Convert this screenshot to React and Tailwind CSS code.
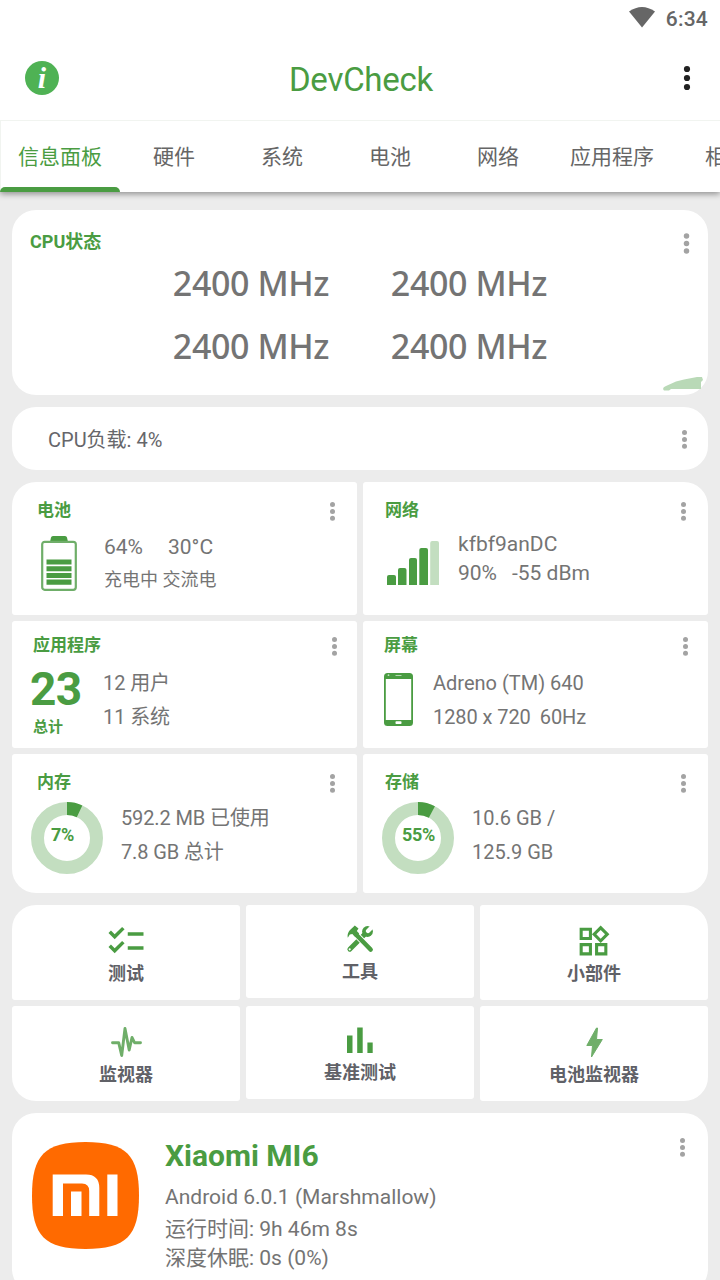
import React, { useState } from 'react'
import { MdChecklist, MdOutlineWidgets } from 'react-icons/md'

const TABS = [
  { label: '信息面板', width: 'w-[120px]' },
  { label: '硬件', width: 'w-[108px]' },
  { label: '系统', width: 'w-[108px]' },
  { label: '电池', width: 'w-[108px]' },
  { label: '网络', width: 'w-[108px]' },
  { label: '应用程序', width: 'w-[120px]' },
  { label: '相机', width: 'w-[108px]' },
]

const CORES = [2400, 2400, 2400, 2400]

function Dots({ className = '' }) {
  return (
    <svg viewBox="0 0 7 20" className={`h-5 w-[7px] shrink-0 fill-[#a3a3a3] ${className}`}>
      <circle cx="3.5" cy="3.6" r="2.5" />
      <circle cx="3.5" cy="10.4" r="2.5" />
      <circle cx="3.5" cy="17.2" r="2.5" />
    </svg>
  )
}

function Card({ className = '', children }) {
  return <section className={`bg-white ${className}`}>{children}</section>
}

function CardHeader({ title, className = '', dots = '' }) {
  return (
    <div className={`flex justify-between ${className}`}>
      <h2 className="text-[17px] leading-6 font-bold text-[#4a9c42]">{title}</h2>
      <Dots className={`mt-[3px] ${dots}`} />
    </div>
  )
}

function Donut({ label, sweep, labelClass }) {
  const len = 2 * Math.PI * 29.5
  return (
    <div className="relative h-[72px] w-[72px] shrink-0">
      <svg viewBox="0 0 72 72" className="h-full w-full -rotate-90">
        <circle cx="36" cy="36" r="29.5" fill="none" stroke="#c3dec0" strokeWidth="13" />
        <circle
          cx="36" cy="36" r="29.5" fill="none" stroke="#4a9c42" strokeWidth="13"
          strokeDasharray={`${len * sweep} ${len}`}
        />
      </svg>
      <span className={`absolute top-[21px] text-[18px] leading-6 font-bold tracking-[-0.3px] text-[#4a9c42] ${labelClass}`}>
        {label}
      </span>
    </div>
  )
}

function BatteryIcon() {
  return (
    <svg viewBox="0 0 36 55" className="h-[55px] w-9 shrink-0">
      <path d="M9 6 10 1.5Q10.300 0 12 0H24Q25.700 0 26 1.500L27 6Z" fill="#4a9c42" />
      <rect x="1.200" y="5.800" width="33.600" height="48" rx="2.500" fill="none" stroke="#6fae69" strokeWidth="2.200" />
      <path d="M5.500 23.500h25v5h-25zM5.500 30.200h25v5h-25zM5.500 36.900h25v5h-25zM5.500 43.600h25v5.200h-25z" fill="#4a9c42" />
    </svg>
  )
}

function SignalIcon() {
  return (
    <svg viewBox="0 0 52 44" className="h-11 w-[52px] shrink-0 fill-[#4a9c42]">
      <path d="M0 44V36q0-2 2-2h5q2 0 2 2v8z" />
      <path d="M11 44V29q0-2 2-2h4.500q2 0 2 2v15z" />
      <path d="M22 44V19q0-2 2-2h4q2 0 2 2v25z" />
      <path d="M32.300 44V9q0-2 2-2H39q2 0 2 2v35z" />
      <path d="M43.200 44V2q0-2 2-2H50q2 0 2 2v42z" fill="#c3dec0" />
    </svg>
  )
}

function PhoneIcon() {
  return (
    <svg viewBox="0 0 29 53" className="h-[53px] w-[29px] shrink-0">
      <rect width="29" height="53" rx="3.500" fill="#4a9c42" />
      <rect x="1.800" y="6" width="25.400" height="41" fill="#fff" />
      <rect x="11.500" y="48.300" width="6" height="2.700" rx="0.800" fill="#fff" />
      <path d="M11.500 2.500h6" stroke="#c3dec0" strokeWidth="0.900" />
      <circle cx="4.500" cy="2.200" r="0.900" fill="#c3dec0" />
    </svg>
  )
}

function ToolsIcon() {
  return (
    <svg viewBox="0 0 28 28" className="h-7 w-7">
      {/* wrench */}
      <path d="M3.800 24.200 19.500 8.500" stroke="#4a9c42" strokeWidth="4.800" strokeLinecap="round" />
      <circle cx="21.500" cy="6.500" r="5.400" fill="#4a9c42" />
      <path d="M22 6 29-1" stroke="#fff" strokeWidth="4.200" strokeLinecap="round" />
      <circle cx="3.700" cy="24.300" r="1.100" fill="#fff" />
      {/* hammer */}
      <path d="M12 11.500 24.600 24.300" stroke="#fff" strokeWidth="6.200" />
      <path d="M9.500 9 24.600 24.500" stroke="#4a9c42" strokeWidth="4.600" strokeLinecap="round" />
      <path d="M1.800 12.800C1 8.500 3 5.500 6.200 3L8.800 0.600 12.500 3.500 10.800 6 13.200 8.600 9.300 12 6.300 9 3.800 9.500Z" fill="#4a9c42" />
    </svg>
  )
}

function PulseIcon() {
  return (
    <svg viewBox="0 0 32 32" className="h-8 w-8">
      <path
        d="M2.500 16.700H8.700L11.700 29.500 15 2.500 19.200 24 22 11.500 24.500 16.700H30.500"
        fill="none" stroke="#6fae69" strokeWidth="2.900" strokeLinecap="round" strokeLinejoin="round"
      />
    </svg>
  )
}

function BarsIcon() {
  return (
    <svg viewBox="0 0 26 26" className="h-[26px] w-[26px] fill-[#4a9c42]">
      <path d="M0 8.500h5.500V26H0zM10.200 0.500h5.500V26h-5.500zM20.400 15.500h5.300V26h-5.300z" />
    </svg>
  )
}

function BoltIcon() {
  return (
    <svg viewBox="0 0 17 31" className="h-[31px] w-[17px]">
      <path d="M10.500 1 0.800 18.500H6.500L5.500 30 16.300 12.500H10.500L11.500 1Z" fill="#6fae69" stroke="#6fae69" strokeLinejoin="round" />
    </svg>
  )
}

function MiLogo() {
  return (
    <svg viewBox="0 0 107 107" className="mt-[29px] ml-5 h-[107px] w-[107px] shrink-0">
      <path d="M53.500 0C94 0 107 13 107 53.500S94 107 53.500 107 0 94 0 53.500 13 0 53.500 0Z" fill="#ff6a00" />
      <path
        d="M20.700 32.500H54Q67.300 32.500 67.300 46V74H57.200V49Q57.200 41.500 50 41.500H31V74H20.700ZM39 49.500H49.500V74H39ZM75.300 32.500H85.500V74H75.300Z"
        fill="#fff"
      />
    </svg>
  )
}

const SHORTCUTS = [
  { label: '测试', icon: <MdChecklist className="h-[42px] w-[42px] shrink-0 text-[#4a9c42]" />, shape: 'rounded-[3px] rounded-tl-[24px] h-[95px]' },
  { label: '工具', icon: <ToolsIcon />, shape: 'rounded-[3px] h-[93px]' },
  { label: '小部件', icon: <MdOutlineWidgets className="mr-0.5 h-[37px] w-[37px] text-[#4a9c42]" />, shape: 'rounded-[3px] rounded-tr-[24px] h-[95px]' },
  { label: '监视器', icon: <PulseIcon />, shape: 'rounded-[3px] rounded-bl-[24px] h-[95px]' },
  { label: '基准测试', icon: <BarsIcon />, shape: 'rounded-[3px] h-[93px]' },
  { label: '电池监视器', icon: <BoltIcon />, shape: 'rounded-[3px] rounded-br-[24px] h-[95px]' },
]

export default function App() {
  const [active, setActive] = useState(0)

  return (
    <div className="h-[1280px] w-[720px] overflow-hidden bg-[#ececec] font-['Roboto','Noto_Sans_CJK_SC',sans-serif] text-[#747474]">
      <header className="relative h-48 bg-white shadow-[0_2px_6px_rgba(0,0,0,0.4)]">
        {/* Status bar */}
        <div className="flex h-9 items-center justify-end gap-3 pt-0.5 pr-3">
          <svg viewBox="0 0 26 21" className="-mt-1 -mr-px h-[21px] w-[26px] fill-[#666]">
            <path d="M0 4.500Q13-4.500 26 4.500L13 20.500Z" />
          </svg>
          <span className="text-[21px] leading-9 font-medium tracking-[0.2px] text-[#666]">6:34</span>
        </div>

        {/* Title bar */}
        <div className="grid h-[84px] grid-cols-[1fr_auto_1fr] items-center px-[30px]">
          <div className="-ml-[5px] flex h-[34px] w-[34px] items-center justify-center rounded-full bg-[#4fb254] font-['Liberation_Serif',serif] text-[30px] leading-[34px] font-bold text-white italic">
            i
          </div>
          <h1 className="pt-[3px] pl-0.5 text-[33px] leading-10 tracking-[-0.25px] text-[#4a9c42]">DevCheck</h1>
          <svg viewBox="0 0 6 24" className="h-6 w-1.5 justify-self-end overflow-visible fill-[#212121]">
            <circle cx="3" cy="3" r="3.100" />
            <circle cx="3" cy="12" r="3.100" />
            <circle cx="3" cy="21" r="3.100" />
          </svg>
        </div>

        {/* Tabs */}
        <nav className="flex h-[72px] overflow-hidden border-t border-[#f1f4f0] shadow-[inset_1px_0_#f1f4f0]">
          {TABS.map((tab, i) => (
            <button
              key={tab.label}
              onClick={() => setActive(i)}
              className={`flex h-[71px] shrink-0 flex-col justify-between text-[21px] ${tab.width} ${active === i ? 'text-[#4a9c42]' : 'text-[#666]'}`}
            >
              <span className="block w-full pt-[3px] text-center leading-[66px]">{tab.label}</span>
              {active === i && <span className="-mt-1 block h-[5px] w-full shrink-0 rounded-t-[5px] bg-[#4a9c42]" />}
            </button>
          ))}
        </nav>
      </header>

      <main className="flex flex-col gap-3 px-3 pt-[18px]">
        {/* CPU status */}
        <Card className="relative h-[185px] rounded-[24px]">
          <div className="flex justify-between px-[18px] pt-5">
            <h2 className="text-[18px] leading-6 font-bold text-[#4a9c42]">CPU状态</h2>
            <Dots className="mt-[3px] scale-110" />
          </div>
          <div className="mx-auto -mt-0.5 grid w-[436px] grid-cols-2 font-['Noto_Sans',sans-serif] text-[34px] leading-[63px] font-medium tracking-[-0.4px]">
            {CORES.map((mhz, i) => (
              <span key={i} className="text-center">{mhz} MHz</span>
            ))}
          </div>
          <svg viewBox="0 0 40 14" className="absolute right-[5px] bottom-1 h-3.5 w-10 fill-[#b9d9b7]">
            <path d="M0 12Q0 10 3 9L13 4.500 21 2.500 34 0H39L40 3 38 5V12H8L6 13.500H1Z" />
          </svg>
        </Card>

        {/* CPU load */}
        <Card className="flex h-[63px] items-center justify-between rounded-[24px] pr-5 pl-9">
          <span className="pt-0.5 text-[20px] leading-7 text-[#66666a]">CPU负载: 4%</span>
          <Dots />
        </Card>

        <div className="grid grid-cols-2 gap-1.5">
          {/* Battery */}
          <Card className="h-[133px] rounded-[3px] rounded-tl-[24px]">
            <CardHeader title="电池" className="pt-4 pl-[25px]" dots="mr-[21px]" />
            <div className="flex pl-[29px]">
              <div className="mt-3.5"><BatteryIcon /></div>
              <div className="mt-2.5 ml-[27px]">
                <div className="flex gap-[25px] text-[21px] leading-[30px]">
                  <span>64%</span>
                  <span>30°C</span>
                </div>
                <p className="mt-px text-[18px] leading-[34px]">充电中 交流电</p>
              </div>
            </div>
          </Card>

          {/* Network */}
          <Card className="h-[133px] rounded-[3px] rounded-tr-[24px]">
            <CardHeader title="网络" className="pt-4 pl-[22px]" dots="mr-[21px]" />
            <div className="flex pl-6">
              <div className="mt-[19px]"><SignalIcon /></div>
              <div className="mt-2 ml-[19px] text-[21px] leading-[29px]">
                <p>kfbf9anDC</p>
                <p className="flex gap-[15px]"><span>90%</span><span>-55 dBm</span></p>
              </div>
            </div>
          </Card>

          {/* Apps */}
          <Card className="h-[127px] rounded-[3px]">
            <CardHeader title="应用程序" className="pt-3 pl-[21px]" dots="mr-[19px]" />
            <div className="flex pl-[18px]">
              <div className="mt-[9px] w-[73px] font-bold text-[#4a9c42]">
                <p className="text-[46px] leading-[47px] tracking-[-0.7px]">23</p>
                <p className="mt-px pl-[3px] text-[15px] leading-[26px]">总计</p>
              </div>
              <div className="mt-[9px] text-[20px] leading-[34px] tracking-[-0.1px]">
                <p>12 用户</p>
                <p>11 系统</p>
              </div>
            </div>
          </Card>

          {/* Display */}
          <Card className="h-[127px] rounded-[3px]">
            <CardHeader title="屏幕" className="pt-3 pl-[21px]" dots="mr-[19px]" />
            <div className="flex pl-[21px]">
              <div className="mt-4"><PhoneIcon /></div>
              <div className="mt-[9px] ml-5 text-[20px] leading-[34px]">
                <p>Adreno (TM) 640</p>
                <p className="flex gap-[9px] tracking-[-0.08px]"><span>1280 x 720</span><span>60Hz</span></p>
              </div>
            </div>
          </Card>

          {/* Memory */}
          <Card className="h-[139px] rounded-[3px] rounded-bl-[24px]">
            <CardHeader title="内存" className="pt-4 pl-[25px]" dots="mr-[21px]" />
            <div className="flex pl-[19px]">
              <div className="mt-2"><Donut label="7%" sweep={0.07} labelClass="left-5" /></div>
              <div className="mt-[7px] ml-[18px] text-[20px] leading-[34px] tracking-[-0.12px]">
                <p>592.2 MB 已使用</p>
                <p>7.8 GB 总计</p>
              </div>
            </div>
          </Card>

          {/* Storage */}
          <Card className="h-[139px] rounded-[3px] rounded-br-[24px]">
            <CardHeader title="存储" className="pt-4 pl-[22px]" dots="mr-[21px]" />
            <div className="flex pl-[19px]">
              <div className="mt-2"><Donut label="55%" sweep={0.078} labelClass="left-5" /></div>
              <div className="mt-[7px] ml-[18px] text-[20px] leading-[34px]">
                <p>10.6 GB /</p>
                <p>125.9 GB</p>
              </div>
            </div>
          </Card>
        </div>

        {/* Shortcuts */}
        <div className="grid grid-cols-3 items-start gap-1.5">
          {SHORTCUTS.map(s => (
            <button key={s.label} className={`flex flex-col items-center justify-end bg-white pb-3.5 ${s.shape}`}>
              <span className="flex h-10 items-center justify-center">{s.icon}</span>
              <span className="mt-px text-[18px] leading-6 font-bold text-[#606167]">{s.label}</span>
            </button>
          ))}
        </div>

        {/* Device */}
        <Card className="flex h-[180px] rounded-[24px]">
          <MiLogo />
          <div className="mt-[25px] ml-[26px] flex-1 text-[21px] leading-[30px]">
            <h2 className="text-[30px] leading-9 font-bold text-[#4a9c42]">Xiaomi MI6</h2>
            <p className="mt-2">Android 6.0.1 (Marshmallow)</p>
            <p className="mt-0.5">运行时间: 9h 46m 8s</p>
            <p className="-mt-px">深度休眠: 0s (0%)</p>
          </div>
          <Dots className="mt-6 mr-[22px]" />
        </Card>
      </main>
    </div>
  )
}
